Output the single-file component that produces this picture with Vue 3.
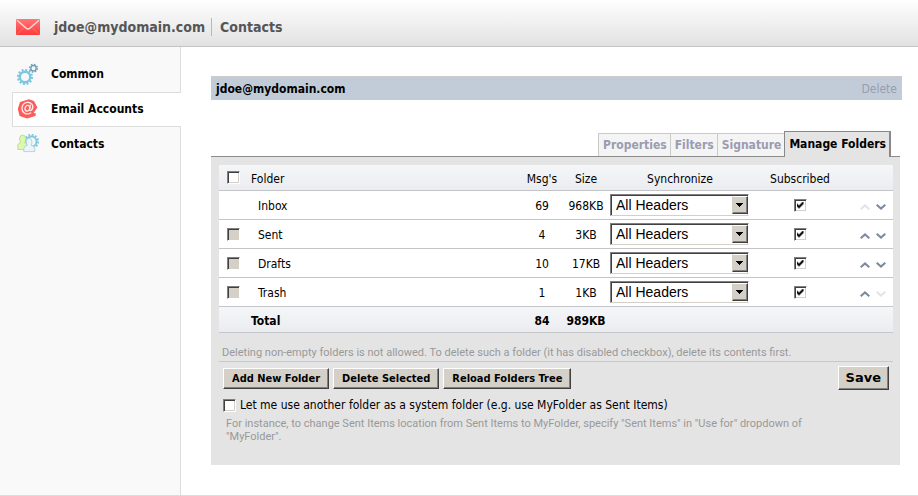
<script setup>
import { reactive, ref } from 'vue'

const folders = reactive([
  { name: 'Inbox', msgs: 69, size: '968KB', sync: 'all', subscribed: true },
  { name: 'Sent', msgs: 4, size: '3KB', sync: 'all', subscribed: true },
  { name: 'Drafts', msgs: 10, size: '17KB', sync: 'all', subscribed: true },
  { name: 'Trash', msgs: 1, size: '1KB', sync: 'all', subscribed: true }
])
const tabs = ['Properties', 'Filters', 'Signature', 'Manage Folders']
const activeTab = ref('Manage Folders')
const useOther = ref(false)

function move(index, step) {
  const [row] = folders.splice(index, 1)
  folders.splice(index + step, 0, row)
}
</script>

<template>
  <div class="page">
    <header class="top">
      <svg class="mail" viewBox="0 0 24 16" aria-hidden="true">
        <defs>
          <linearGradient id="mailFill" x1="0" y1="0" x2="0" y2="1">
            <stop offset="0" stop-color="#ff7676" />
            <stop offset=".6" stop-color="#ff5252" />
            <stop offset="1" stop-color="#fb3c3c" />
          </linearGradient>
        </defs>
        <rect width="24" height="16" rx="1" fill="url(#mailFill)" />
        <path d="M1 15 9 8M23 15 15 8" stroke="#ff7a7a" stroke-width=".6" fill="none" />
        <path d="M1 1.2 10.4 9.4Q12 10.7 13.6 9.4L23 1.2" stroke="#ffd4d2" stroke-width="1.4" fill="none" />
      </svg>
      <a class="top-link" href="#mail">jdoe@mydomain.com</a>
      <a class="top-link second" href="#contacts">Contacts</a>
    </header>

    <div class="body">
      <nav class="side">
        <a class="item" href="#common">
          <svg class="icon" viewBox="0 0 22 22" aria-hidden="true">
            <circle cx="8" cy="14" r="7" fill="none" stroke="#7cc6e0" stroke-width="2.2" stroke-dasharray="2 1.665" />
            <circle cx="8" cy="14" r="5.2" fill="#f9f9f9" stroke="#7cc6e0" stroke-width="2.4" />
            <circle cx="16.5" cy="5.2" r="3.9" fill="none" stroke="#6f9fb5" stroke-width="1.4" stroke-dasharray="1.5 1.563" />
            <circle cx="16.5" cy="5.2" r="2.7" fill="#f9f9f9" stroke="#6f9fb5" stroke-width="1.4" />
          </svg>
          <span>Common</span>
        </a>
        <a class="item active" href="#accounts">
          <svg class="icon" viewBox="0 0 22 22" aria-hidden="true">
            <path d="M3 4 12 1.2 17 3 20.4 9.6 16.6 15 19 15.4 18.4 18 10 20.6 2.6 18 .8 11Z" fill="#fb5d5d" />
            <g fill="none" stroke="#ffe9e9" stroke-width="1.3" stroke-linecap="round">
              <ellipse cx="10.4" cy="10.2" rx="2.3" ry="2.9" transform="rotate(15 10.4 10.2)" />
              <path d="M13.4 7.2 12.5 11.8Q13 13.4 14.6 12 16.8 9.4 15.3 6.7 13.4 4 10.2 4.3 6 4.8 5 9.3 4.6 14.6 9.1 15.8 11.8 16.2 13.8 15" />
            </g>
          </svg>
          <span>Email Accounts</span>
        </a>
        <a class="item" href="#contacts">
          <svg class="icon" viewBox="0 0 22 22" aria-hidden="true">
            <circle cx="14.5" cy="8.5" r="6.6" fill="none" stroke="#82c9e3" stroke-width="2" stroke-dasharray="1.9 1.556" />
            <circle cx="14.5" cy="8.5" r="5" fill="none" stroke="#82c9e3" stroke-width="2" />
            <path d="M5.8 2Q8.8 2.2 8.8 5.6 8.8 8.4 7.5 9.6L10 11V16.5H.8V12Q1.2 10.2 3.6 9.4 2.6 8 2.6 5.6 2.6 2.2 5.8 2Z" fill="#dcf7ae" stroke="#b4d98a" stroke-width=".8" />
            <path d="M12 5.2Q15 5.4 15 8.8 15 11 14 12.2 17.6 13 17.8 15.6V18.6H6.8V15.6Q7 13 10.4 12.2 9.2 11 9.2 8.8 9.2 5.4 12 5.2Z" fill="#e9f5fc" stroke="#a9c9d9" stroke-width=".8" />
          </svg>
          <span>Contacts</span>
        </a>
      </nav>

      <main class="content">
        <div class="account">
          <h1>jdoe@mydomain.com</h1>
          <button type="button" class="plain">Delete</button>
        </div>

        <div class="tabs" role="tablist">
          <button
            v-for="tab in tabs"
            :key="tab"
            type="button"
            role="tab"
            class="tab"
            :class="{ on: tab === activeTab }"
            :aria-selected="tab === activeTab"
            @click="activeTab = tab"
          >{{ tab }}</button>
        </div>

        <section class="panel">
          <table>
            <colgroup>
              <col class="c-check"><col><col class="c-num"><col class="c-num">
              <col class="c-sync"><col class="c-sub"><col class="c-move">
            </colgroup>
            <thead>
              <tr>
                <th class="pick"><input type="checkbox" class="box" aria-label="Select all folders"></th>
                <th class="left">Folder</th>
                <th>Msg's</th>
                <th>Size</th>
                <th>Synchronize</th>
                <th>Subscribed</th>
                <th></th>
              </tr>
            </thead>
            <tbody>
              <tr v-for="(f, i) in folders" :key="f.name">
                <td class="pick">
                  <input v-if="f.name !== 'Inbox'" type="checkbox" class="box" disabled :aria-label="'Select ' + f.name">
                </td>
                <td class="name">{{ f.name }}</td>
                <td class="num">{{ f.msgs }}</td>
                <td class="num">{{ f.size }}</td>
                <td>
                  <span class="combo">
                    <select v-model="f.sync" :aria-label="'Synchronize ' + f.name">
                      <option value="all">All Headers</option>
                    </select>
                    <span class="drop"></span>
                  </span>
                </td>
                <td><input v-model="f.subscribed" type="checkbox" class="box" :aria-label="'Subscribed to ' + f.name"></td>
                <td>
                  <span class="moves">
                    <button type="button" class="arrow" :disabled="i === 0" :aria-label="'Move up ' + f.name" @click="move(i, -1)">
                      <svg viewBox="0 0 10 6" aria-hidden="true"><path d="M.7 5.2 5 1.4 9.3 5.2" /></svg>
                    </button>
                    <button type="button" class="arrow" :disabled="i === folders.length - 1" :aria-label="'Move down ' + f.name" @click="move(i, 1)">
                      <svg viewBox="0 0 10 6" aria-hidden="true"><path d="M.7.8 5 4.6 9.3.8" /></svg>
                    </button>
                  </span>
                </td>
              </tr>
            </tbody>
            <tfoot>
              <tr>
                <td></td>
                <td class="left">Total</td>
                <td class="num">84</td>
                <td class="num">989KB</td>
                <td colspan="3"></td>
              </tr>
            </tfoot>
          </table>

          <p class="note">Deleting non-empty folders is not allowed. To delete such a folder (it has disabled checkbox), delete its contents first.</p>

          <div class="actions">
            <button type="button" class="btn">Add New Folder</button>
            <button type="button" class="btn">Delete Selected</button>
            <button type="button" class="btn">Reload Folders Tree</button>
            <button type="button" class="btn save">Save</button>
          </div>

          <div class="option">
            <input id="other" v-model="useOther" type="checkbox" class="box">
            <label for="other">Let me use another folder as a system folder (e.g. use MyFolder as Sent Items)</label>
          </div>
          <p class="hint">For instance, to change Sent Items location from Sent Items to MyFolder, specify "Sent Items" in "Use for" dropdown of "MyFolder".</p>
        </section>
      </main>
    </div>
  </div>
</template>

<style>
html, body { margin: 0; background: #fff; }
</style>

<style scoped>
.page {
  display: flex;
  flex-direction: column;
  box-sizing: border-box;
  min-height: 100vh;
  border-bottom: 1px solid #dcdcdc;
  font: 12px/16px "DejaVu Sans Condensed", "DejaVu Sans", sans-serif;
  color: #000;
}
.page * { box-sizing: border-box; }
a { color: inherit; text-decoration: none; }
h1, p { margin: 0; }
button, select { font: inherit; border-radius: 0; }

.top {
  display: flex;
  align-items: center;
  height: 47px;
  padding: 8px 16px 0;
  border-bottom: 1px solid #c4c4c4;
  background: linear-gradient(#fefefe, #e2e2e2);
}
.mail { width: 24px; height: 16px; margin-right: 14px; }
.top-link { font-size: 14px; line-height: 18px; font-weight: bold; color: #555; }
.second { margin-left: 6px; padding-left: 8px; border-left: 1px solid #b8b8b8; }

.body { display: flex; flex: 1; }
.side {
  width: 181px;
  padding: 10px 0 0 12px;
  background: linear-gradient(#dcdcdc, #dcdcdc) right / 1px 100% no-repeat #f9f9f9;
}
.item {
  display: flex;
  align-items: center;
  gap: 12px;
  height: 35px;
  padding: 0 0 2px 5px;
  font-weight: bold;
}
.item.active {
  padding-left: 4px;
  border: solid #dcdcdc;
  border-width: 1px 0 1px 1px;
  background: #fff;
}
.icon { width: 22px; height: 22px; }

.content { flex: 1; min-width: 0; padding: 29px 16px 30px 30px; }
.account {
  display: flex;
  align-items: center;
  justify-content: space-between;
  height: 24px;
  padding: 0 4px 0 5px;
  border: solid #cccccc;
  border-width: 1px 1px 0 0;
  background: #c1ccd8;
}
h1 { font-size: 12px; line-height: 16px; }
.plain { padding: 0; border: 0; background: none; color: #9a9cb0; }

.tabs {
  display: flex;
  align-items: flex-end;
  justify-content: flex-end;
  height: 57px;
  margin-right: 2px;
  padding-right: 9px;
  border-bottom: 1px solid #8c8c8c;
}
.tab {
  height: 23px;
  padding: 0 3px 0 4px;
  border: 1px solid #cacaca;
  border-width: 1px 0 0 1px;
  background: #f4f4f4;
  font-weight: bold;
  color: #9a9cb0;
}
.tab.on {
  height: 26px;
  margin-bottom: -1px;
  padding-bottom: 2px;
  border: solid #888;
  border-width: 1px 2px 0 1px;
  background: #e4e4e4;
  color: #000;
}

.panel {
  margin-right: 2px;
  padding: 8px 7px 22px 8px;
  background: #e4e4e4;
}
table { width: 100%; table-layout: fixed; border-collapse: separate; border-spacing: 0; background: #fff; }
.c-check { width: 32px; }
.c-num { width: 44px; }
.c-sync { width: 144px; }
.c-sub { width: 96px; }
.c-move { width: 45px; }
th, td {
  height: 29px;
  padding: 0;
  border-bottom: 1px solid #c4c5c9;
  text-align: center;
  font-weight: normal;
  white-space: nowrap;
}
thead th, tfoot td { height: 26px; }
thead tr, tfoot tr { background: linear-gradient(#f5f6f8, #ebecef); }
tfoot td { font-weight: bold; }
th:not(.pick), td.left, td.name, td.num { padding-top: 2px; }
th.left, td.left { text-align: left; }
td.name { padding-left: 7px; text-align: left; }
th.pick, td.pick { padding-left: 8px; text-align: left; }

.box {
  appearance: none;
  display: block;
  flex: none;
  width: 13px;
  height: 13px;
  margin: 0;
  border: 1px solid;
  border-color: #808080 #fff #fff #808080;
  background: #fff;
  box-shadow: inset 1px 1px #404040, inset -1px -1px #d4d0c8;
}
td:not(.pick) .box { margin: 0 auto; }
.box:disabled { background: #d4d0c8; }
.box:checked::before {
  content: "";
  display: block;
  width: 7px;
  height: 7px;
  margin: 2px;
  background: #000;
  clip-path: polygon(0 2px, 1px 2px, 1px 3px, 2px 3px, 2px 4px, 3px 4px, 3px 3px, 4px 3px, 4px 2px, 5px 2px, 5px 1px, 6px 1px, 6px 0, 7px 0, 7px 3px, 6px 3px, 6px 4px, 5px 4px, 5px 5px, 4px 5px, 4px 6px, 3px 6px, 3px 7px, 2px 7px, 2px 6px, 1px 6px, 1px 5px, 0 5px);
}

.combo { display: block; position: relative; width: 139px; height: 22px; margin-left: 2px; }
select {
  appearance: none;
  display: block;
  width: 100%;
  height: 100%;
  padding: 0 20px 0 5px;
  border: 1px solid;
  border-color: #808080 #fff #d4d0c8 #808080;
  background: #fff;
  box-shadow: inset 1px 1px #404040, inset -1px 0 #d4d0c8;
  font: 14px/18px "Liberation Sans", Arial, sans-serif;
  color: #000;
}
.drop {
  position: absolute;
  top: 2px;
  right: 1px;
  width: 16px;
  height: 18px;
  border: 1px solid;
  border-color: #fff #404040 #404040 #d4d0c8;
  background: #d4d0c8;
  box-shadow: inset -1px -1px #808080;
  pointer-events: none;
}
.drop::before {
  content: "";
  display: block;
  margin: 6px 0 0 3px;
  width: 7px;
  height: 4px;
  background: #000;
  clip-path: polygon(0 0, 7px 0, 7px 1px, 6px 1px, 6px 2px, 5px 2px, 5px 3px, 4px 3px, 4px 4px, 3px 4px, 3px 3px, 2px 3px, 2px 2px, 1px 2px, 1px 1px, 0 1px);
}

.moves { display: flex; gap: 6px; padding: 3px 0 0 12px; }
.arrow { width: 10px; height: 6px; padding: 0; border: 0; background: none; color: #7b8aa0; }
.arrow:disabled { color: #e2e4ea; }
.arrow svg { display: block; width: 10px; height: 6px; }
.arrow path { fill: none; stroke: currentColor; stroke-width: 2; }

.note, .hint { font-family: Roboto, sans-serif; font-size: 11px; color: #999; }
.note { padding: 12px 3px 0; border-bottom: 1px solid #c5c5dc; }
.actions { display: flex; align-items: center; gap: 4px; padding: 4px 4px 7px; }
.btn {
  height: 21px;
  padding: 1px 8px 0;
  border: 1px solid;
  border-color: #fff #404040 #404040 #fff;
  background: #d4d0c8;
  box-shadow: inset -1px -1px #808080;
  font-size: 11px;
  line-height: 14px;
  font-weight: bold;
  color: #000;
}
.save { height: 24px; margin-left: auto; padding: 0 7px; font-size: 13px; font-family: "DejaVu Sans", sans-serif; }
.option { display: flex; align-items: center; gap: 4px; padding-left: 4px; }
.hint { padding: 4px 72px 0 7px; line-height: 13px; }
</style>
